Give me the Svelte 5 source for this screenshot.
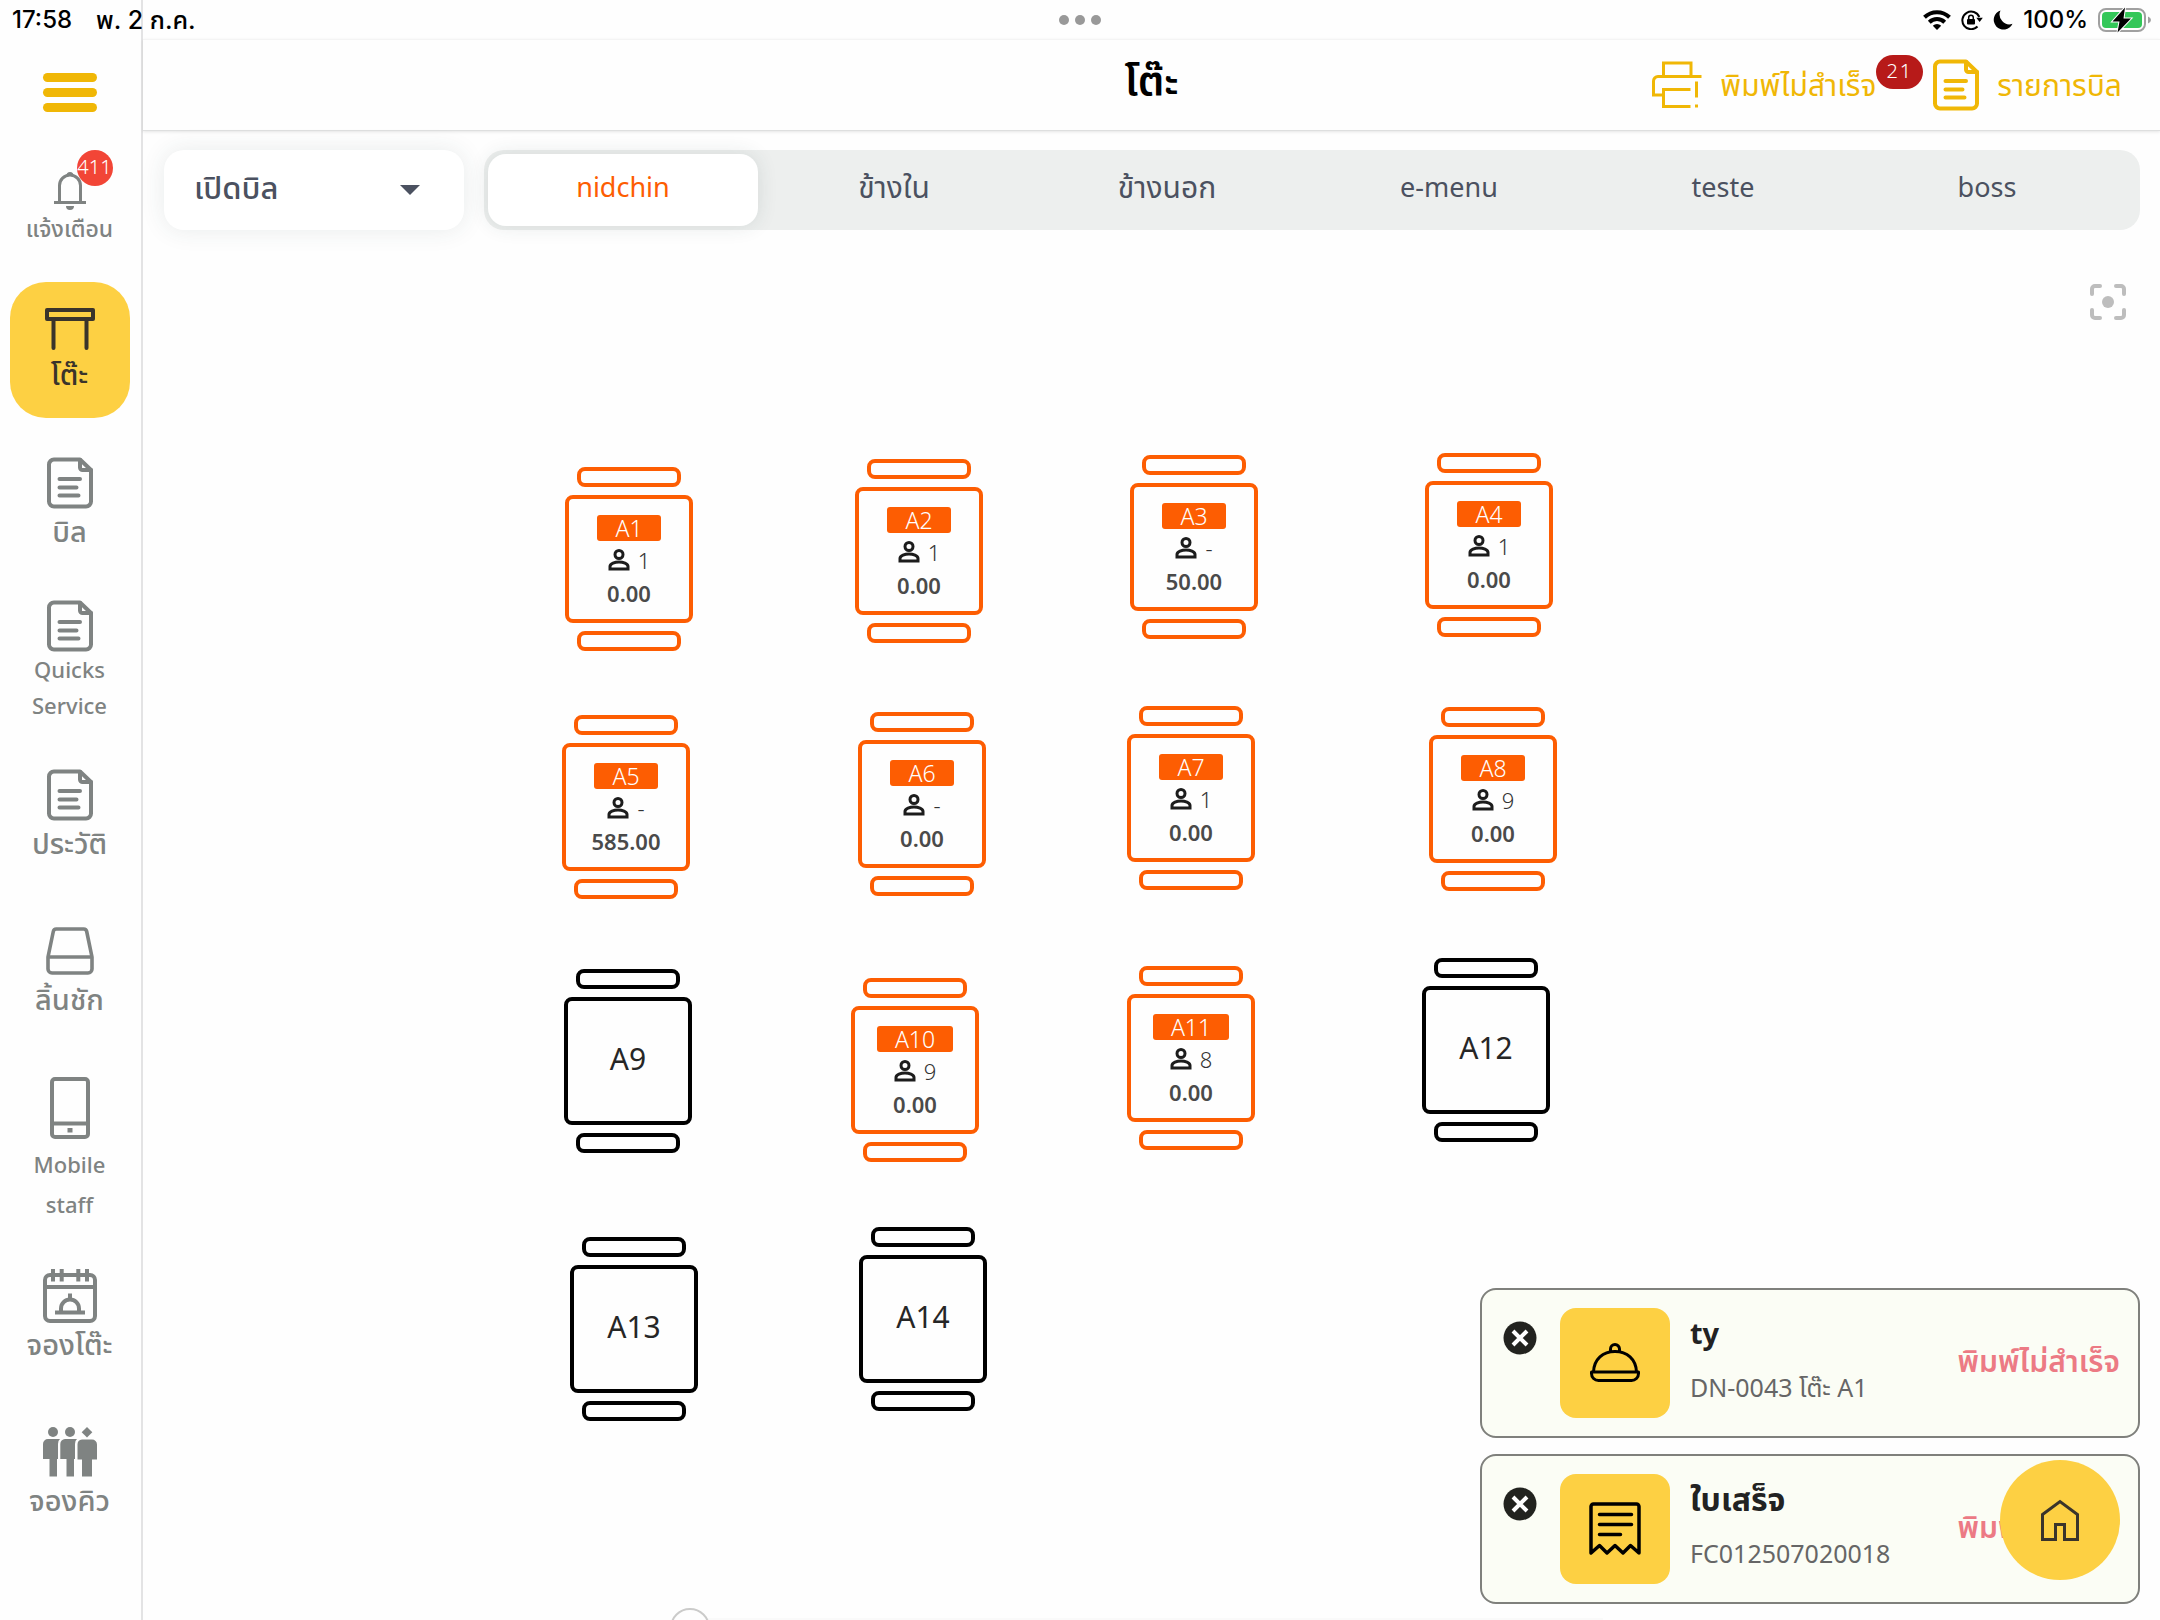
<script lang="ts">
  type Table = { name: string; x: number; y: number; guests?: string; total?: string };

  const tables: Table[] = [
    { name: 'A1', x: 565, y: 467, guests: '1', total: '0.00' },
    { name: 'A2', x: 855, y: 459, guests: '1', total: '0.00' },
    { name: 'A3', x: 1130, y: 455, guests: '-', total: '50.00' },
    { name: 'A4', x: 1425, y: 453, guests: '1', total: '0.00' },
    { name: 'A5', x: 562, y: 715, guests: '-', total: '585.00' },
    { name: 'A6', x: 858, y: 712, guests: '-', total: '0.00' },
    { name: 'A7', x: 1127, y: 706, guests: '1', total: '0.00' },
    { name: 'A8', x: 1429, y: 707, guests: '9', total: '0.00' },
    { name: 'A9', x: 564, y: 969 },
    { name: 'A10', x: 851, y: 978, guests: '9', total: '0.00' },
    { name: 'A11', x: 1127, y: 966, guests: '8', total: '0.00' },
    { name: 'A12', x: 1422, y: 958 },
    { name: 'A13', x: 570, y: 1237 },
    { name: 'A14', x: 859, y: 1227 }
  ];
  // Table coordinates are stored for the whole screen; the plan starts below the toolbar.
  const planLeft = 143;
  const planTop = 250;

  const zones = ['nidchin', 'ข้างใน', 'ข้างนอก', 'e-menu', 'teste', 'boss'];
  let zone = $state('nidchin');

  const notices = [
    { icon: 'dish', title: 'ty', detail: 'DN-0043 โต๊ะ A1' },
    { icon: 'receipt', title: 'ใบเสร็จ', detail: 'FC012507020018' }
  ];

  // Thai glyphs run smaller than Latin ones, so Thai strings are marked and sized up.
  const langOf = (text: string) => (/[\u0e00-\u0e7f]/.test(text) ? 'th' : 'en');
</script>

{#snippet docIcon()}
  <svg width="46" height="52" viewBox="0 0 46 52" fill="none" stroke="currentColor" stroke-width="4" stroke-linejoin="round" stroke-linecap="round" aria-hidden="true">
    <path d="M33 2.500H7a5 5 0 0 0-5 5v37a5 5 0 0 0 5 5h32a5 5 0 0 0 5-5V13z" />
    <path d="M33 3v7.500a2.500 2.500 0 0 0 2.500 2.500H44" />
    <path d="M12.500 22h20.500M12.500 30.500h17M12.500 38.500h19" />
  </svg>
{/snippet}

<div class="app">
  <div class="status">
    <span class="clock">17:58</span>
    <span class="date">พ. 2 ก.ค.</span>
    <span class="dots"><i></i><i></i><i></i></span>
    <span class="device">
      <svg width="28" height="20" viewBox="0 0 28 20" fill="none" stroke="#000" stroke-width="4" aria-hidden="true">
        <path d="M1.500 7.300a18 18 0 0 1 25 0" />
        <path d="M6.300 12.200a11 11 0 0 1 15.400 0" />
        <path d="M14 20l-4.200-4.300a6.200 6.200 0 0 1 8.400 0z" fill="#000" stroke="none" />
      </svg>
      <svg width="22" height="20" viewBox="0 0 22 20" fill="none" stroke="#000" stroke-width="2" aria-hidden="true">
        <path d="M16.500 16.500A8.800 8.800 0 1 1 18.300 7" />
        <path d="M15.300 7.800h6.500L18.600 12z" fill="#000" stroke="none" />
        <rect x="6" y="9" width="8" height="5.500" rx="1" fill="#000" stroke="none" />
        <path d="M7.700 9.500V7.500a2.300 2.300 0 0 1 4.600 0v2" stroke-width="1.500" />
      </svg>
      <svg width="20" height="20" viewBox="0 0 20 20" aria-hidden="true">
        <path d="M7.500.500a9.800 9.800 0 1 0 12 13.300A9.800 9.800 0 0 1 7.500.500z" />
      </svg>
      <span class="charge">100%</span>
      <svg width="54" height="26" viewBox="0 0 54 26" aria-hidden="true">
        <rect x="1" y="2" width="46" height="22" rx="7" fill="none" stroke="#a0a0a0" stroke-width="2" />
        <rect x="4" y="5" width="40" height="16" rx="4" fill="#34c759" />
        <path d="M50 9.500q3 1.200 3 3.500t-3 3.500z" fill="#a0a0a0" />
        <path d="M27 .500L14.500 14.500h7L19.500 25.500 33 11.500h-7.500z" stroke="#fff" stroke-width="2" paint-order="stroke" />
      </svg>
    </span>
  </div>

  <nav class="side" aria-label="เมนูหลัก">
    <button class="burger" aria-label="เมนู"><i></i><i></i><i></i></button>

    <button class="item bell">
      <span class="bell-icon">
        <svg width="32" height="40" viewBox="0 0 32 40" fill="none" stroke="currentColor" stroke-width="3" aria-hidden="true">
          <path d="M5.500 32V15.500a10.500 10.500 0 0 1 21 0V32M0 32.500h32" />
          <path d="M12.500 5.500a3.500 3.500 0 0 1 7 0zM12 36h8a4 4 0 0 1-8 0z" fill="currentColor" stroke="none" />
        </svg>
        <span class="count">411</span>
      </span>
      <span class="label small">แจ้งเตือน</span>
    </button>

    <button class="item active" aria-current="page">
      <svg width="50" height="42" viewBox="0 0 50 42" fill="none" stroke="currentColor" stroke-width="4" aria-hidden="true">
        <path d="M2 2h46v9H2z" stroke-linejoin="round" />
        <path d="M8.500 12v28M41.500 12v28" stroke-linecap="round" />
      </svg>
      <span class="label">โต๊ะ</span>
    </button>

    <button class="item">
      <span class="icon">{@render docIcon()}</span>
      <span class="label">บิล</span>
    </button>
    <button class="item service">
      <span class="icon">{@render docIcon()}</span>
      <span class="label quick">Quicks Service</span>
    </button>
    <button class="item">
      <span class="icon">{@render docIcon()}</span>
      <span class="label">ประวัติ</span>
    </button>
    <button class="item far">
      <span class="icon">
        <svg width="48" height="48" viewBox="0 0 48 48" fill="none" stroke="currentColor" stroke-width="3.600" stroke-linejoin="round" aria-hidden="true">
          <path d="M2 30L7.300 4.500a3.200 3.200 0 0 1 3-2.500h27.400a3.200 3.200 0 0 1 3 2.500L46 30v12a4 4 0 0 1-4 4H6a4 4 0 0 1-4-4z" />
          <path d="M2 30h44" />
        </svg>
      </span>
      <span class="label">ลิ้นชัก</span>
    </button>
    <button class="item phone">
      <span class="icon tall">
        <svg width="40" height="62" viewBox="0 0 40 62" fill="none" stroke="currentColor" stroke-width="4" aria-hidden="true">
          <rect x="2" y="2" width="36" height="58" rx="3" />
          <path d="M2 46.500h36" />
          <path d="M17.500 51h5v4.500h-5z" fill="currentColor" stroke="none" />
        </svg>
      </span>
      <span class="label mobile">Mobile staff</span>
    </button>
    <button class="item">
      <span class="icon">
        <svg width="54" height="54" viewBox="0 0 54 54" fill="none" stroke="currentColor" stroke-width="4" aria-hidden="true">
          <rect x="2" y="6" width="50" height="46" rx="5" />
          <path d="M2 18h50M10 0v12.500M18.700 0v12.500M35.300 0v12.500M44 0v12.500" />
          <path d="M12 43.500h30M18 43v-3.500a9 9 0 0 1 18 0V43M27 24.500V31" />
        </svg>
      </span>
      <span class="label">จองโต๊ะ</span>
    </button>
    <button class="item far">
      <span class="icon">
        <svg width="54" height="50" viewBox="0 0 54 50" fill="currentColor" aria-hidden="true">
          <circle cx="10" cy="5" r="5" />
          <circle cx="27" cy="5" r="5" />
          <path d="M44 0l5.300 5.300L44 10.600 38.700 5.300z" />
          <path d="M5 12h12q-2 1.500-2 5v15h-1v17.500H6.500V32H0V17a5 5 0 0 1 5-5z" />
          <path d="M22 12h12q-2 1.500-2 5v15h-1v17.500h-7.500V32H17.300V17a5 5 0 0 1 4.700-5z" />
          <path d="M39 12.500h10a5 5 0 0 1 5 5v15h-5v17H39v-17h-4.500v-15a5 5 0 0 1 4.500-5z" />
        </svg>
      </span>
      <span class="label">จองคิว</span>
    </button>
  </nav>

  <main>
    <header>
      <h1>โต๊ะ</h1>
      <div class="actions">
        <button class="action">
          <svg width="50" height="48" viewBox="0 0 50 48" fill="none" stroke="currentColor" stroke-width="3" aria-hidden="true">
            <path d="M11.500 15V2h27.500v13M49.500 15.500H6a4.500 4.500 0 0 0-4.500 4.500v14h10M38.500 28.500h-27v17h27" />
            <path d="M44.500 20.500v16M44.500 43.500v3" />
          </svg>
          <span>พิมพ์ไม่สำเร็จ</span>
          <span class="failed">21</span>
        </button>
        <button class="action">
          {@render docIcon()}
          <span>รายการบิล</span>
        </button>
      </div>
    </header>

    <div class="toolbar">
      <div class="mode">
        <select aria-label="โหมด">
          <option>เปิดบิล</option>
        </select>
        <svg width="20" height="10" viewBox="0 0 20 10" fill="#4b5160" aria-hidden="true"><path d="M0 0h20L10 10z" /></svg>
      </div>
      <div class="zones" role="tablist">
        {#each zones as z}
          <button role="tab" lang={langOf(z)} aria-selected={zone === z} class:on={zone === z} onclick={() => (zone = z)}>{z}</button>
        {/each}
      </div>
    </div>

    <section class="plan" aria-label="ผังโต๊ะ">
      <button class="focus" aria-label="จัดกึ่งกลาง">
        <svg width="36" height="36" viewBox="0 0 36 36" fill="none" stroke="#bdbdbd" stroke-width="4" stroke-linecap="round" aria-hidden="true">
          <path d="M2 10V5a3 3 0 0 1 3-3h5M26 2h5a3 3 0 0 1 3 3v5M34 26v5a3 3 0 0 1-3 3h-5M10 34H5a3 3 0 0 1-3-3v-5" />
          <circle cx="18" cy="18" r="6" fill="#bdbdbd" stroke="none" />
        </svg>
      </button>

      {#each tables as t}
        <button class="table" class:busy={t.guests} style="left: {t.x - planLeft}px; top: {t.y - planTop}px">
          <span class="chair"></span>
          <span class="top">
            {#if t.guests}
              <span class="tag">{t.name}</span>
              <span class="guests">
                <svg width="22" height="22" viewBox="0 0 22 22" fill="none" stroke="#1c1c1c" stroke-width="3" aria-hidden="true">
                  <circle cx="11" cy="5.500" r="4" />
                  <path d="M2 20v-2.500c0-3 5-4.500 9-4.500s9 1.500 9 4.500V20z" />
                </svg>
                {t.guests}
              </span>
              <span class="total">{t.total}</span>
            {:else}
              <span class="name">{t.name}</span>
            {/if}
          </span>
          <span class="chair"></span>
        </button>
      {/each}

      <span class="sheet"></span>
      <span class="handle"></span>

      <div class="notices">
        {#each notices as n}
          <article>
            <button class="close" aria-label="ปิด">
              <svg width="34" height="34" viewBox="0 0 34 34" aria-hidden="true">
                <circle cx="17" cy="17" r="16.500" fill="#22231f" />
                <path d="M10 10l14 14M24 10L10 24" stroke="#fff" stroke-width="4" />
              </svg>
            </button>
            <span class="thumb">
              {#if n.icon === 'dish'}
                <svg width="50" height="40" viewBox="0 0 50 40" fill="none" stroke="#000" stroke-width="3" stroke-linejoin="round" aria-hidden="true">
                  <path d="M3.500 29C4 16 13 8.500 25 8.500S46 16 46.500 29" />
                  <path d="M20.500 8.500V6a4.500 4.500 0 0 1 9 0v2.500" />
                  <path d="M1.500 29h47v1.500a7 7 0 0 1-7 7h-33a7 7 0 0 1-7-7z" />
                </svg>
              {:else}
                <svg width="52" height="54" viewBox="0 0 52 54" fill="none" stroke="#000" stroke-width="3.500" stroke-linejoin="round" stroke-linecap="round" aria-hidden="true">
                  <path d="M2 51V4.500A2.500 2.500 0 0 1 4.500 2h43A2.500 2.500 0 0 1 50 4.500V51l-8.500-7.500L34 51l-8-7.500L18 51l-7.500-7.500z" />
                  <path d="M10.500 12.500h32M10.500 22.500h32M10.500 32.500h21" />
                </svg>
              {/if}
            </span>
            <div class="info">
              <h2 lang={langOf(n.title)}>{n.title}</h2>
              <p>{n.detail}</p>
            </div>
            <strong>พิมพ์ไม่สำเร็จ</strong>
          </article>
        {/each}
      </div>

      <button class="home" aria-label="หน้าหลัก">
        <svg width="38" height="42" viewBox="0 0 38 42" fill="none" stroke="#3a342b" stroke-width="3" aria-hidden="true">
          <path d="M1.500 15.500L19 2.500l17.500 13v25H23.500v-15h-9v15h-13z" />
        </svg>
      </button>
    </section>
  </main>
</div>

<style>
  :global(body) {
    background: #fefefe;
  }
  .app {
    position: relative;
    display: flex;
    min-height: 100vh;
    overflow: hidden;
    color: #4b5160;
    font-family: 'Noto Sans', 'Noto Sans Thai', 'IBM Plex Sans Thai', sans-serif;
  }
  .app * {
    box-sizing: border-box;
  }
  button {
    margin: 0;
    padding: 0;
    border: 0;
    background: none;
    color: inherit;
    font: inherit;
    cursor: pointer;
  }
  svg {
    display: block;
    flex: none;
  }

  .status {
    position: absolute;
    inset: 0 0 auto 0;
    display: flex;
    align-items: center;
    height: 40px;
    padding: 0 8px 0 12px;
    color: #000;
    font: 500 24px/40px Inter, 'Noto Sans Thai', sans-serif;
  }
  .date {
    margin-left: 24px;
    font-size: 25px;
  }
  .dots {
    position: absolute;
    left: 50%;
    display: flex;
    gap: 6px;
    transform: translateX(-50%);
  }
  .dots i {
    width: 10px;
    height: 10px;
    border-radius: 50%;
    background: #999;
  }
  .device {
    display: flex;
    align-items: center;
    gap: 10px;
    margin-left: auto;
  }

  .side {
    display: flex;
    flex: none;
    flex-direction: column;
    align-items: center;
    width: 143px;
    padding: 73px 2px 40px 0;
    border-right: 2px solid #e3e3e4;
    color: #7f8382;
  }
  .burger {
    display: flex;
    flex-direction: column;
    gap: 6px;
    width: 54px;
  }
  .burger i {
    height: 9px;
    border-radius: 5px;
    background: #f0b706;
  }
  .item {
    display: flex;
    flex-direction: column;
    align-items: center;
    width: 120px;
    margin-top: 44px;
    font-weight: 500;
  }
  .item.far {
    margin-top: 60px;
  }
  .item.service {
    margin-top: 47px;
  }
  .item.phone {
    margin-top: 53px;
  }
  .item.bell {
    margin-top: 58px;
  }
  .bell-icon {
    position: relative;
  }
  .count {
    position: absolute;
    top: -20px;
    right: -27px;
    width: 36px;
    height: 36px;
    border-radius: 50%;
    background: #f24536;
    color: #fff;
    font-size: 20px;
    font-weight: 300;
    line-height: 34px;
    text-align: center;
  }
  .item.active {
    gap: 4px;
    height: 136px;
    margin: 36px 0 -7px;
    padding-top: 26px;
    border-radius: 36px;
    background: #fdd043;
    color: #3a342b;
  }
  .icon {
    display: grid;
    place-items: center;
    height: 56px;
  }
  .icon.tall {
    height: 72px;
  }
  .label {
    font-size: 29px;
    line-height: 40px;
    white-space: nowrap;
  }
  .small {
    font-size: 23px;
    line-height: 36px;
  }
  .quick,
  .mobile {
    width: 90px;
    font-size: 22px;
    white-space: normal;
  }
  .quick {
    margin-top: -3px;
    line-height: 36px;
  }

  main {
    display: flex;
    flex: 1;
    flex-direction: column;
    min-width: 0;
    padding-top: 39px;
  }
  header {
    display: grid;
    grid-template-columns: 1fr auto 1fr;
    align-items: center;
    height: 92px;
    padding: 0 38px;
    border-top: 1px solid #f4f4f4;
    border-bottom: 1px solid #dedfdf;
    box-shadow: 0 1px 3px #0000001a;
  }
  h1 {
    grid-column: 2;
    margin: 0 0 10px;
    color: #000;
    font-size: 41px;
    font-weight: 600;
    line-height: 44px;
  }
  .actions {
    display: flex;
    gap: 10px;
    justify-content: flex-end;
  }
  .action {
    display: flex;
    align-items: center;
    gap: 18px;
    color: #f0b706;
    font-size: 30px;
    line-height: 44px;
    white-space: nowrap;
  }
  .failed {
    height: 34px;
    margin: 0 0 26px -18px;
    padding: 0 10px;
    border-radius: 17px;
    background: #b71a19;
    color: #fff;
    font-size: 20px;
    font-weight: 300;
    letter-spacing: 2px;
    line-height: 32px;
  }

  .toolbar {
    display: flex;
    gap: 20px;
    padding: 19px 20px 20px 21px;
  }
  .mode {
    display: grid;
    flex: none;
    align-items: center;
    width: 300px;
    height: 80px;
    border-radius: 20px;
    background: #fff;
    box-shadow: 0 0 24px #2a40401a;
  }
  .mode > * {
    grid-area: 1 / 1;
  }
  .mode svg {
    justify-self: end;
    margin-right: 44px;
    pointer-events: none;
  }
  select {
    width: 100%;
    height: 80px;
    padding: 0 30px 6px;
    border: 0;
    border-radius: 20px;
    appearance: none;
    background: none;
    color: inherit;
    font: inherit;
    font-size: 31px;
    font-weight: 500;
  }
  .zones {
    display: grid;
    flex: 1;
    grid-template-columns: 270fr 272fr 274fr 290fr 258fr 270fr;
    height: 80px;
    padding: 4px 18px 4px 4px;
    border-radius: 20px;
    background: #edefee;
  }
  .zones button {
    padding-bottom: 6px;
    border-radius: 18px;
    font-size: 27px;
    line-height: 40px;
  }
  .zones button:lang(th) {
    font-size: 30px;
  }
  .zones .on {
    background: #fff;
    box-shadow: 0 0 20px #2a40401f;
    color: #fd5d02;
  }

  .plan {
    position: relative;
    flex: 1;
    min-height: 1200px;
  }
  .focus {
    position: absolute;
    top: 34px;
    right: 34px;
  }
  .table {
    position: absolute;
    display: flex;
    flex-direction: column;
    align-items: center;
    gap: 8px;
    width: 128px;
    color: #000;
  }
  .table.busy {
    color: #fd5d02;
  }
  .chair {
    width: 104px;
    height: 20px;
    border: 4px solid currentColor;
    border-radius: 8px;
  }
  .top {
    display: flex;
    flex-direction: column;
    align-items: center;
    justify-content: center;
    width: 128px;
    height: 128px;
    padding-bottom: 4px;
    border: 4px solid currentColor;
    border-radius: 8px;
  }
  .busy .top {
    justify-content: flex-start;
    padding: 16px 0 0;
  }
  .tag {
    height: 26px;
    padding: 0 18px;
    border-radius: 3px;
    background: #fd5d02;
    color: #fff;
    font-size: 23px;
    font-weight: 300;
    line-height: 26px;
  }
  .guests {
    display: flex;
    align-items: center;
    gap: 8px;
    height: 37px;
    color: #333;
    font-size: 22px;
    font-weight: 300;
  }
  .total {
    color: #4a4a4a;
    font-size: 22px;
    font-weight: 600;
    line-height: 30px;
  }
  .name {
    color: #262626;
    font-size: 30px;
    line-height: 40px;
  }

  .sheet {
    position: absolute;
    bottom: 0;
    left: 560px;
    width: 900px;
    height: 2px;
    background: #fafafa;
  }
  .handle {
    position: absolute;
    bottom: -28px;
    left: 527px;
    width: 40px;
    height: 40px;
    border: 2px solid #cbcbca;
    border-radius: 50%;
    background: #fefefe;
  }

  .notices {
    position: absolute;
    right: 20px;
    bottom: 16px;
    display: flex;
    flex-direction: column;
    gap: 16px;
    width: 660px;
  }
  article {
    display: flex;
    align-items: center;
    height: 150px;
    padding: 0 18px 0 21px;
    border: 2px solid #7f807c;
    border-radius: 16px;
    background: #fbfdf5;
  }
  .close {
    margin-bottom: 50px;
  }
  .thumb {
    display: grid;
    flex: none;
    place-items: center;
    width: 110px;
    height: 110px;
    margin: 0 20px 0 23px;
    border-radius: 16px;
    background: #fdd043;
  }
  .info {
    flex: 1;
    margin-bottom: 6px;
  }
  h2 {
    margin: 0 0 14px;
    color: #222;
    font-size: 29px;
    font-weight: 700;
    line-height: 40px;
  }
  h2:lang(th) {
    font-size: 32px;
  }
  p {
    margin: 0;
    color: #666;
    font-size: 25px;
    line-height: 40px;
  }
  strong {
    margin-bottom: 4px;
    color: #ec7a84;
    font-size: 30px;
    font-weight: 600;
    line-height: 44px;
  }
  .home {
    position: absolute;
    right: 40px;
    bottom: 40px;
    display: grid;
    place-items: center;
    width: 120px;
    height: 120px;
    border-radius: 50%;
    background: #fdd043;
  }
</style>
